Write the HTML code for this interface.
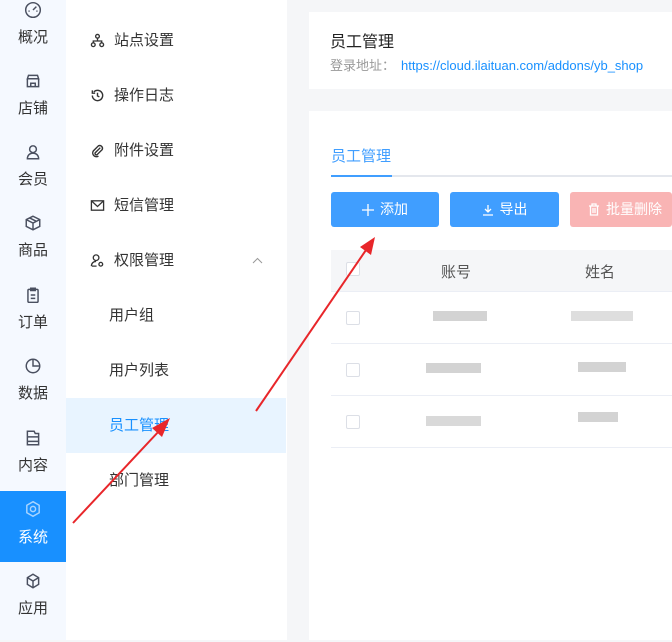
<!DOCTYPE html>
<html><head><meta charset="utf-8"><style>
*{margin:0;padding:0;box-sizing:border-box}
body{width:672px;height:640px;overflow:hidden;background:#f5f6f8;font-family:"Liberation Sans","Noto Sans CJK SC",sans-serif;position:relative;color:#333}
.rail{position:absolute;left:0;top:0;width:66px;height:640px;background:#f5f9ff}
.ri{position:absolute;left:0;width:66px;height:71px;text-align:center;color:#333;font-size:15px}
.ri svg{position:absolute;left:24px;width:18px;height:18px}
.ri span{position:absolute;left:0;width:66px}
.ri.act{background:#1890ff;color:#fff}
.side{position:absolute;left:66px;top:0;width:221px;height:640px;background:#fff}
.si{position:absolute;left:0;width:221px;height:55px;font-size:15px;line-height:55px;color:#333}
.si svg{position:absolute;left:24px;top:20px;width:15px;height:15px}
.si span{position:absolute;left:48px}
.si.sub span{left:43px}
.si.act{background:#e8f4ff;color:#1890ff;width:220px}
.card1{position:absolute;left:309px;top:12px;width:363px;height:77px;background:#fff}
.card2{position:absolute;left:309px;top:111px;width:363px;height:529px;background:#fff}
.btn{position:absolute;top:192px;height:35px;border-radius:3px;color:#fff;font-size:14px;line-height:35px;text-align:center}
.btn svg{display:inline-block;vertical-align:-2px;margin-right:6px}
.blk{position:absolute;height:10px;background:#c8c8c8;opacity:.8}
.cb{position:absolute;left:346px;width:14px;height:14px;border:1px solid #dcdfe6;border-radius:2px;background:#fff}
.hl{position:absolute;left:331px;width:341px;height:1px;background:#ebeef5}
</style></head><body>
<div class="rail">
 <div class="ri" style="top:0"><svg style="top:1px" viewBox="0 0 16 16" fill="none" stroke="#4a5060" stroke-width="1.3"><circle cx="8" cy="8" r="6.5"/><path d="M8 8l3-3M4 9h1M11 9h1"/></svg><span style="top:26px">概况</span></div>
 <div class="ri" style="top:71px"><svg style="top:1px" viewBox="0 0 16 16" fill="none" stroke="#4a5060" stroke-width="1.3"><path d="M3 6h10l-1-3H4zM3 6v7h10V6M6 13v-3h4v3"/></svg><span style="top:26px">店铺</span></div>
 <div class="ri" style="top:142px"><svg style="top:1px" viewBox="0 0 16 16" fill="none" stroke="#4a5060" stroke-width="1.3"><circle cx="8" cy="5.5" r="3"/><path d="M3 14c0-3 2-5 5-5s5 2 5 5z"/></svg><span style="top:26px">会员</span></div>
 <div class="ri" style="top:213px"><svg style="top:1px" viewBox="0 0 16 16" fill="none" stroke="#4a5060" stroke-width="1.3"><path d="M8 2l6 3v6l-6 3-6-3V5zM2 5l6 3 6-3M8 8v6M5 3.5l6 3"/></svg><span style="top:26px">商品</span></div>
 <div class="ri" style="top:285px"><svg style="top:1px" viewBox="0 0 16 16" fill="none" stroke="#4a5060" stroke-width="1.3"><rect x="3.5" y="3" width="9" height="11.5" rx="1"/><path d="M6 2h4v2H6zM6 8h4M6 11h4"/></svg><span style="top:26px">订单</span></div>
 <div class="ri" style="top:356px"><svg style="top:1px" viewBox="0 0 16 16" fill="none" stroke="#4a5060" stroke-width="1.3"><circle cx="8" cy="8" r="6"/><path d="M8 2v6h6"/></svg><span style="top:26px">数据</span></div>
 <div class="ri" style="top:428px"><svg style="top:1px" viewBox="0 0 16 16" fill="none" stroke="#4a5060" stroke-width="1.3"><path d="M3 2h6l1 2h3v10H3zM3 7h10M3 11h10"/></svg><span style="top:26px">内容</span></div>
 <div class="ri act" style="top:491px;height:71px"><svg style="top:9px" viewBox="0 0 16 16" fill="none" stroke="#a8d4ff" stroke-width="1.3"><path d="M8 1.5l5.5 3.2v6.6L8 14.5l-5.5-3.2V4.7z"/><circle cx="8" cy="8" r="2.3"/></svg><span style="top:35px">系统</span></div>
 <div class="ri" style="top:571px"><svg style="top:1px" viewBox="0 0 16 16" fill="none" stroke="#4a5060" stroke-width="1.3"><path d="M8 2l5 3v6l-5 3-5-3V5zM3 5l5 3 5-3M8 8v6"/></svg><span style="top:26px">应用</span></div>
</div>
<div class="side">
 <div class="si" style="top:13px"><svg viewBox="0 0 16 16" fill="none" stroke="#333" stroke-width="1.4"><circle cx="8" cy="3.5" r="2"/><circle cx="3.5" cy="12.5" r="2"/><circle cx="12.5" cy="12.5" r="2"/><path d="M8 5.5v3M3.5 10.5V8.5h9v2"/></svg><span>站点设置</span></div>
 <div class="si" style="top:68px"><svg viewBox="0 0 16 16" fill="none" stroke="#333" stroke-width="1.5"><path d="M2.5 8a5.5 5.5 0 1 0 1.6-3.9M2.5 2.5v3h3M8 5v3.5l2 1"/></svg><span>操作日志</span></div>
 <div class="si" style="top:123px"><svg viewBox="0 0 16 16" fill="none" stroke="#333" stroke-width="1.5"><path d="M11 5l-5.5 5.5a1.5 1.5 0 0 0 2 2L13 7a3 3 0 0 0-4-4L3.5 8.5a4 4 0 0 0 5.5 5.5"/></svg><span>附件设置</span></div>
 <div class="si" style="top:178px"><svg viewBox="0 0 16 16" fill="none" stroke="#333" stroke-width="1.4"><rect x="1.5" y="3" width="13" height="10"/><path d="M1.5 3l6.5 6 6.5-6"/></svg><span>短信管理</span></div>
 <div class="si" style="top:233px"><svg viewBox="0 0 16 16" fill="none" stroke="#333" stroke-width="1.4"><circle cx="6.5" cy="5" r="3"/><path d="M1.5 14c0-3 2-5 5-5M2 14h5"/><circle cx="11.5" cy="12" r="2"/></svg><span>权限管理</span><svg style="left:186px;top:24px;width:11px;height:7px" viewBox="0 0 11 7" fill="none" stroke="#999" stroke-width="1"><path d="M1 6l4.5-4.5L10 6"/></svg></div>
 <div class="si sub" style="top:288px"><span>用户组</span></div>
 <div class="si sub" style="top:343px"><span>用户列表</span></div>
 <div class="si sub act" style="top:398px"><span>员工管理</span></div>
 <div class="si sub" style="top:453px"><span>部门管理</span></div>
</div>
<div class="card1">
 <div style="position:absolute;left:21px;top:16px;font-size:16px;color:#222">员工管理</div>
 <div style="position:absolute;left:21px;top:43px;font-size:13px;white-space:nowrap"><span style="color:#999">登录地址：</span><span style="color:#1890ff;margin-left:6px">https://cloud.ilaituan.com/addons/yb_shop</span></div>
</div>
<div class="card2"></div>
<div style="position:absolute;left:331px;top:145px;font-size:15px;color:#409eff">员工管理</div>
<div style="position:absolute;left:331px;top:175px;width:341px;height:2px;background:#e4e7ed"></div>
<div style="position:absolute;left:331px;top:175px;width:61px;height:2px;background:#409eff"></div>
<div class="btn" style="left:331px;width:108px;background:#409eff"><svg width="12" height="12" viewBox="0 0 12 12" stroke="#fff" stroke-width="1.3"><path d="M6 0v12M0 6h12"/></svg>添加</div>
<div class="btn" style="left:450px;width:109px;background:#409eff"><svg width="12" height="12" viewBox="0 0 12 12" fill="none" stroke="#fff" stroke-width="1.3"><path d="M6 1v7M3 5l3 3 3-3M1 11h10"/></svg>导出</div>
<div class="btn" style="left:570px;width:102px;background:#f9b4b4;text-align:left;padding-left:18px"><svg width="12" height="13" viewBox="0 0 12 13" fill="none" stroke="#fff" stroke-width="1.3"><path d="M1 3h10M4 3V1h4v2M2.5 3v9h7V3M5 5v5M7 5v5"/></svg>批量删除</div>
<div style="position:absolute;left:331px;top:250px;width:341px;height:41px;background:#f5f6f8"></div>
<div class="hl" style="top:291px"></div>
<div class="cb" style="top:262px"></div>
<div style="position:absolute;left:441px;top:261px;font-size:15px;color:#555">账号</div>
<div style="position:absolute;left:585px;top:261px;font-size:15px;color:#555">姓名</div>
<div class="cb" style="top:311px"></div><div class="blk" style="left:433px;top:311px;width:54px"></div><div class="blk" style="left:571px;top:311px;width:62px;background:#d6d6d6"></div>
<div class="hl" style="top:343px"></div>
<div class="cb" style="top:363px"></div><div class="blk" style="left:426px;top:363px;width:55px"></div><div class="blk" style="left:578px;top:362px;width:48px"></div>
<div class="hl" style="top:395px"></div>
<div class="cb" style="top:415px"></div><div class="blk" style="left:426px;top:416px;width:55px;background:#d0d0d0"></div><div class="blk" style="left:578px;top:412px;width:40px"></div>
<div class="hl" style="top:447px"></div>
<svg style="position:absolute;left:0;top:0" width="672" height="640">
 <g stroke="#e8262a" stroke-width="2" fill="#e8262a">
  <line x1="73" y1="523" x2="160" y2="430"/>
  <polygon points="170,418 152,428 162,437" stroke="none"/>
  <line x1="256" y1="411" x2="366" y2="250"/>
  <polygon points="375,237 360,247 371,255" stroke="none"/>
 </g>
</svg>
</body></html>
